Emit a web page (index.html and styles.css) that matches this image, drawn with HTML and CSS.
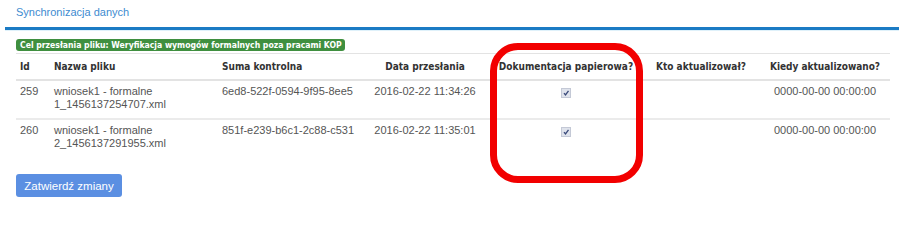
FILE: index.html
```html
<!DOCTYPE html>
<html lang="pl">
<head>
<meta charset="utf-8">
<title>Synchronizacja danych</title>
<link rel="stylesheet" href="styles.css">
</head>
<body>
<div class="page">
  <div class="topbar"><span class="title">Synchronizacja danych</span></div>
  <div class="content">
    <div class="tablewrap">
      <table class="files">
        <caption><span class="badge">Cel przesłania pliku: Weryfikacja wymogów formalnych poza pracami KOP</span></caption>
        <colgroup>
          <col class="c-id"><col class="c-name"><col class="c-sum"><col class="c-date"><col class="c-doc"><col class="c-who"><col class="c-when">
        </colgroup>
        <thead>
          <tr>
            <th>Id</th>
            <th>Nazwa pliku</th>
            <th>Suma kontrolna</th>
            <th class="ctr">Data przesłania</th>
            <th class="ctr">Dokumentacja papierowa?</th>
            <th class="ctr">Kto aktualizował?</th>
            <th class="ctr">Kiedy aktualizowano?</th>
          </tr>
        </thead>
        <tbody>
          <tr>
            <td>259</td>
            <td>wniosek1 - formalne<br>1_1456137254707.xml</td>
            <td>6ed8-522f-0594-9f95-8ee5</td>
            <td class="ctr">2016-02-22 11:34:26</td>
            <td class="ctr"><span class="chk"><svg viewBox="0 0 10 10" width="10" height="10"><path d="M3 5.2 L4.5 7 L7.5 2.8" fill="none" stroke="#3a4a7a" stroke-width="1.3"/></svg></span></td>
            <td class="ctr"></td>
            <td class="ctr">0000-00-00 00:00:00</td>
          </tr>
          <tr class="last">
            <td>260</td>
            <td>wniosek1 - formalne<br>2_1456137291955.xml</td>
            <td>851f-e239-b6c1-2c88-c531</td>
            <td class="ctr">2016-02-22 11:35:01</td>
            <td class="ctr"><span class="chk"><svg viewBox="0 0 10 10" width="10" height="10"><path d="M3 5.2 L4.5 7 L7.5 2.8" fill="none" stroke="#3a4a7a" stroke-width="1.3"/></svg></span></td>
            <td class="ctr"></td>
            <td class="ctr">0000-00-00 00:00:00</td>
          </tr>
        </tbody>
      </table>
      <div class="highlight"></div>
    </div>
    <button class="btn" type="button">Zatwierdź zmiany</button>
  </div>
</div>
</body>
</html>
```

FILE: styles.css
```css
html, body {
  margin: 0;
  padding: 0;
  background: #ffffff;
}

.page {
  width: 899px;
  height: 208px;
  overflow: hidden;
  font-family: "Liberation Sans", Arial, sans-serif;
  color: #555555;
}

.topbar {
  margin-left: 5px;
  height: 27px;
  padding-left: 11px;
  border-bottom: 3px solid #1b7bc4;
  box-shadow: 0 1px 0 #dff1fa;
  display: flex;
  align-items: center;
  box-sizing: content-box;
}

.title {
  font-size: 11px;
  color: #3d8bd0;
  margin-top: -3px;
}

.content {
  padding: 8px 9px 0 16px;
}

.tablewrap {
  position: relative;
}

.files {
  width: 874px;
  border-collapse: collapse;
  table-layout: fixed;
  font-size: 11px;
}

.files caption {
  text-align: left;
  padding: 0 0 2px 0;
}

.badge {
  display: inline-block;
  background: #3f8f3f;
  color: #ffffff;
  font-family: "DejaVu Sans Condensed", "DejaVu Sans", sans-serif;
  font-weight: bold;
  font-size: 8.6px;
  line-height: 12px;
  padding: 0 3px 0 4px;
  border-radius: 3px;
}

.c-id { width: 34px; }
.c-name { width: 168px; }
.c-sum { width: 142px; }
.c-date { width: 130px; }
.c-doc { width: 152px; }
.c-who { width: 118px; }
.c-when { width: 130px; }

.files th {
  font-family: "DejaVu Sans Condensed", "DejaVu Sans", sans-serif;
  font-weight: bold;
  font-size: 10px;
  color: #333333;
  text-align: left;
  padding: 6px 4px 6px 4px;
  line-height: 13px;
  border-top: 1px solid #e3e3e3;
  border-bottom: 2px solid #e3e3e3;
  white-space: nowrap;
}

.files td {
  vertical-align: top;
  padding: 4px 4px 7px 4px;
  line-height: 13px;
  border-bottom: 2px solid #ebebeb;
}

.files tr.last td {
  border-bottom: none;
  padding-bottom: 12px;
}

.files .ctr {
  text-align: center;
}

.chk {
  display: inline-block;
  width: 10px;
  height: 10px;
  margin-top: 3px;
  background: #dfe3ec;
  border: 1px solid #c4c9d6;
  box-sizing: border-box;
  line-height: 0;
}

.chk svg {
  margin: -1px 0 0 -1px;
}

.highlight {
  position: absolute;
  left: 474px;
  top: 5px;
  width: 153px;
  height: 140px;
  border: 7px solid #f20000;
  border-radius: 28px;
  box-sizing: border-box;
  pointer-events: none;
}

.btn {
  margin-top: 12px;
  display: block;
  width: 106px;
  height: 23px;
  border: none;
  border-radius: 3px;
  background: #5b8fe2;
  color: #ffffff;
  font-family: "Liberation Sans", Arial, sans-serif;
  font-size: 11.5px;
  padding: 0;
}
```
